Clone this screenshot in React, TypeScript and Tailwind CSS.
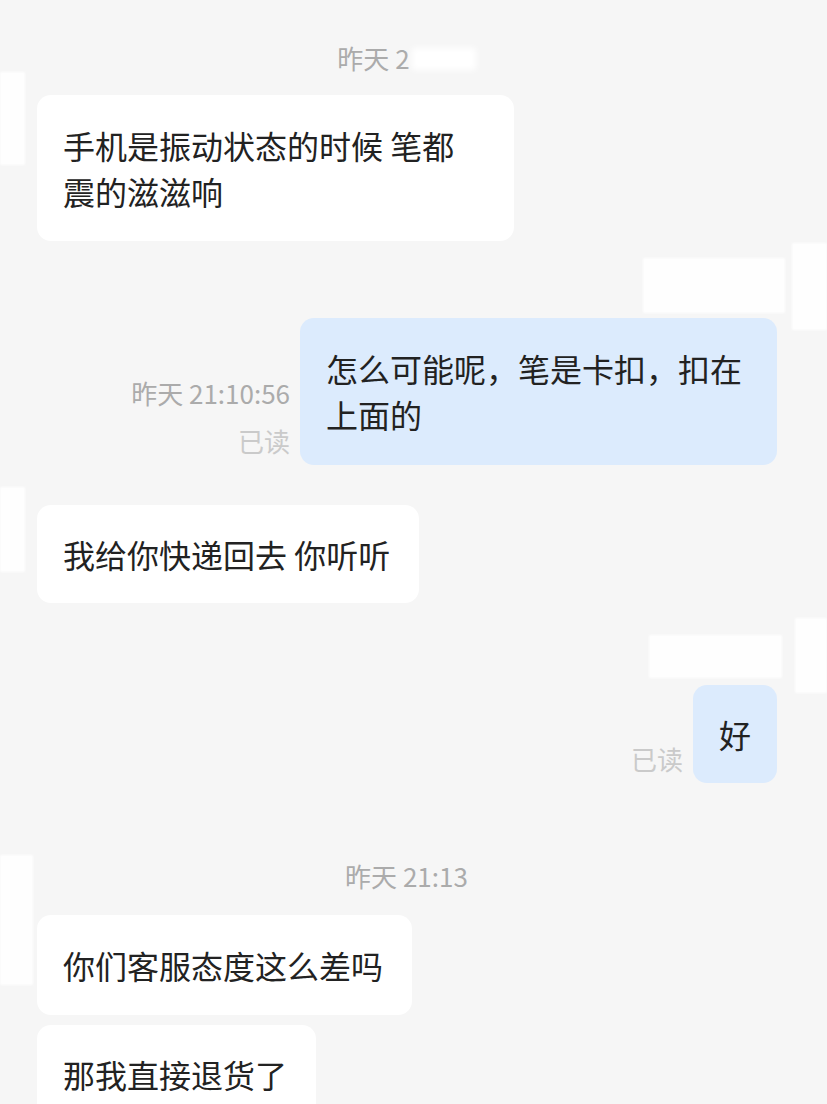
import React from "react"

const font = "font-['Noto_Sans_CJK_SC','Noto_Sans',sans-serif]"

// blurred white masks over avatars / nicknames
const masks = [
  "left-0 top-[72px] w-[25px] h-[93px]",
  "left-0 top-[487px] w-[25px] h-[85px]",
  "left-0 top-[855px] w-[33px] h-[130px]",
  "left-[643px] top-[258px] w-[142px] h-[55px]",
  "left-[792px] top-[243px] w-[35px] h-[87px]",
  "left-[649px] top-[635px] w-[133px] h-[43px]",
  "left-[795px] top-[618px] w-[32px] h-[75px]",
]

function Stamp({ children }: { children: React.ReactNode }) {
  return (
    <div className="flex justify-center pr-[14px] text-[26px] leading-[36px] text-[#ababab]">
      {children}
    </div>
  )
}

function Left({ children, className = "", tall = false }: { children: React.ReactNode; className?: string; tall?: boolean }) {
  return (
    <div className={`flex pl-[37px] ${className}`}>
      <div
        className={`rounded-[14px] bg-white pl-[26px] pr-[29px] text-[32px] leading-[46px] text-[#222] ${tall ? "py-[27px]" : "py-[26px]"}`}
      >
        {children}
      </div>
    </div>
  )
}

function Right({
  children,
  time,
  className = "",
  tall = false,
}: {
  children: React.ReactNode
  time?: string
  className?: string
  tall?: boolean
}) {
  return (
    <div className={`flex items-end justify-end gap-[10px] pr-[50px] ${className}`}>
      <div className="flex flex-col items-end gap-[12px] pb-[6px] text-[26px] leading-[36px]">
        {time && <span className="text-[#ababab]">{time}</span>}
        <span className="text-[#cacaca]">已读</span>
      </div>
      <div
        className={`rounded-[14px] bg-[#dcebfd] px-[26px] text-[32px] leading-[46px] text-[#222] ${tall ? "pt-[27px] pb-[28px]" : "py-[26px]"}`}
      >
        {children}
      </div>
    </div>
  )
}

export default function App() {
  return (
    <div className={`relative h-[1104px] w-[827px] overflow-hidden bg-[#f6f6f6] ${font}`}>
      <div className="flex flex-col pt-[40px]">
        <Stamp>
          <span>昨天 2</span>
          <span className="ml-[2px] mt-[8px] inline-block h-[22px] w-[64px] bg-white blur-[3px]" />
        </Stamp>

        <Left className="mt-[19px]" tall>
          <div className="w-[422px]">
            手机是振动状态的时候 笔都
            <br />
            震的滋滋响
          </div>
        </Left>

        <Right className="mt-[77px]" time="昨天 21:10:56" tall>
          <div className="w-[425px]">
            怎么可能呢，笔是卡扣，扣在
            <br />
            上面的
          </div>
        </Right>

        <Left className="mt-[40px]">我给你快递回去 你听听</Left>

        <Right className="mt-[82px]">好</Right>

        <div className="mt-[75px]">
          <Stamp>昨天 21:13</Stamp>
        </div>

        <Left className="mt-[21px]" tall>你们客服态度这么差吗</Left>
        <Left className="mt-[10px]">那我直接退货了</Left>
      </div>

      {masks.map((m, i) => (
        <div key={i} className={`absolute bg-white/90 blur-[1px] ${m}`} />
      ))}
    </div>
  )
}
